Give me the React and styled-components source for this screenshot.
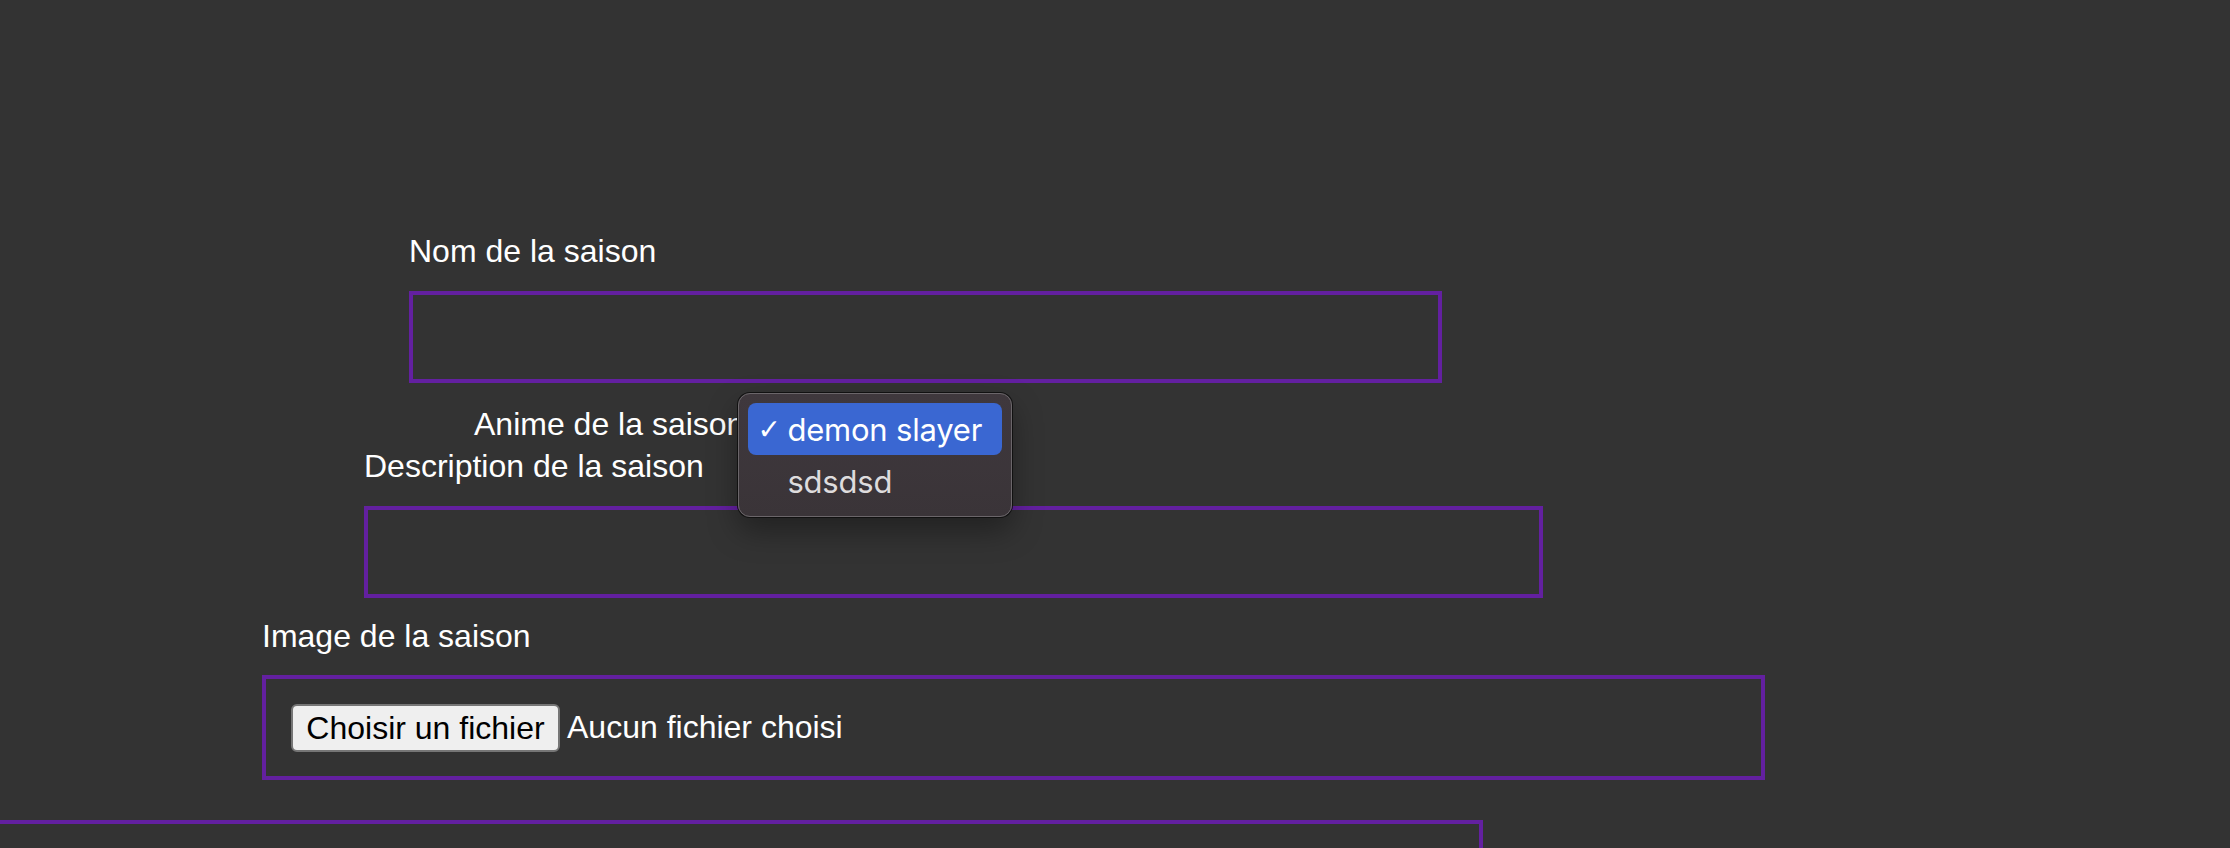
import React from 'react';
import styled, { createGlobalStyle } from 'styled-components';

const GlobalStyle = createGlobalStyle`
  html, body {
    margin: 0;
    padding: 0;
    background-color: #333333;
    overflow: hidden;
  }
  body {
    font-family: "Liberation Sans", Arial, sans-serif;
  }
`;

const Page = styled.div`
  height: 848px;
  overflow: hidden;
  background-color: #333333;
`;

const Form = styled.form`
  display: flex;
  flex-direction: column;
  align-items: flex-start;
  padding-top: 233px;
`;

const Label = styled.label`
  display: block;
  color: #ffffff;
  font-size: 32px;
  line-height: 37px;
  margin-left: ${p => p.$left}px;
  margin-top: ${p => p.$top || 0}px;
  white-space: nowrap;
`;

const Field = styled.div`
  box-sizing: border-box;
  border: 4px solid #6320a0;
  background: transparent;
  margin-left: ${p => p.$left}px;
  margin-top: ${p => p.$top}px;
  width: ${p => p.$width}px;
  height: ${p => p.$height}px;
  flex-shrink: 0;
`;

const FileField = styled(Field)`
  display: flex;
  align-items: center;
  gap: 7px;
  padding: 0 25px;
`;

const FileButton = styled.button`
  box-sizing: border-box;
  width: 269px;
  height: 48px;
  padding: 0;
  background-color: #efefef;
  border: 2px solid #767676;
  border-radius: 6px;
  color: #000000;
  font-family: "Liberation Sans", Arial, sans-serif;
  font-size: 32px;
  line-height: 44px;
`;

const FileName = styled.span`
  color: #ffffff;
  font-size: 32px;
  white-space: nowrap;
`;

const SelectRow = styled.div`
  display: flex;
  align-items: flex-start;
  margin-left: 474px;
  margin-top: 23px;
  height: 42px;
`;

const SelectAnchor = styled.div`
  position: relative;
  width: 10px;
  height: 37px;
`;

const Menu = styled.div`
  position: absolute;
  left: -6px;
  top: -13px;
  box-sizing: border-box;
  width: 274px;
  height: 124px;
  padding: 9px;
  border-radius: 12px;
  background: linear-gradient(180deg, #3f383d 0%, #3a3438 100%);
  border: 1px solid #6b666a;
  box-shadow: 0 0 0 1px #111111, 0 14px 30px rgba(0, 0, 0, 0.35);
  display: flex;
  flex-direction: column;
  z-index: 5;
`;

const MenuItem = styled.div`
  display: flex;
  align-items: center;
  height: 52px;
  border-radius: 8px;
  background-color: ${p => (p.$active ? '#3a67d2' : 'transparent')};
  color: ${p => (p.$active ? '#ffffff' : '#dedcdd')};
  font-family: Inter, "Noto Sans", sans-serif;
  font-size: 31px;
  letter-spacing: -0.2px;
  white-space: nowrap;
`;

const Check = styled.span`
  width: 39px;
  padding-left: 9px;
  box-sizing: border-box;
  font-family: "DejaVu Sans", sans-serif;
  font-size: 28px;
`;

export default function App() {
  return (
    <Page>
      <GlobalStyle />
      <Form>
        <Label $left={409}>Nom de la saison</Label>
        <Field $left={409} $top={21} $width={1033} $height={92} />

        <SelectRow>
          <Label $left={0}>Anime de la saison</Label>
          <SelectAnchor>
            <Menu>
              <MenuItem $active>
                <Check>✓</Check>demon slayer
              </MenuItem>
              <MenuItem>
                <Check />sdsdsd
              </MenuItem>
            </Menu>
          </SelectAnchor>
        </SelectRow>

        <Label $left={364}>Description de la saison</Label>
        <Field $left={364} $top={21} $width={1179} $height={92} />

        <Label $left={262} $top={20}>Image de la saison</Label>
        <FileField $left={262} $top={20} $width={1503} $height={105}>
          <FileButton type="button">Choisir un fichier</FileButton>
          <FileName>Aucun fichier choisi</FileName>
        </FileField>

        <Field $left={-12} $top={40} $width={1495} $height={100} />
      </Form>
    </Page>
  );
}
